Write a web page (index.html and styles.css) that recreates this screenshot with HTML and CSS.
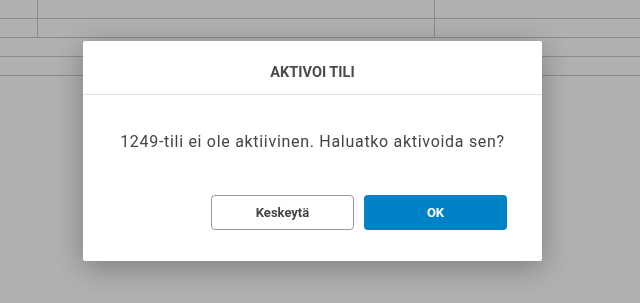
FILE: index.html
```html
<!DOCTYPE html>
<html lang="fi">
<head>
    <meta charset="UTF-8">
    <meta name="viewport" content="width=device-width, initial-scale=1.0">
    <title>Aktivoi tili</title>
    <link rel="stylesheet" href="styles.css">
</head>
<body>
    <!-- Table in the background -->
    <div class="grid">
        <div class="row split">
            <div class="cell first"></div>
            <div class="cell middle"></div>
            <div class="cell"></div>
        </div>
        <div class="row split">
            <div class="cell first"></div>
            <div class="cell middle"></div>
            <div class="cell"></div>
        </div>
        <div class="row"></div>
        <div class="row"></div>
    </div>

    <!-- Dialog -->
    <div class="overlay">
        <div class="dialog">
            <div class="dialog-header">AKTIVOI TILI</div>
            <div class="dialog-body">
                <p class="message">1249-tili ei ole aktiivinen. Haluatko aktivoida sen?</p>
                <div class="actions">
                    <button class="btn btn-cancel">Keskeytä</button>
                    <button class="btn btn-ok">OK</button>
                </div>
            </div>
        </div>
    </div>
</body>
</html>
```

FILE: styles.css
```css
body {
    margin: 0;
    font-family: Roboto, "Liberation Sans", Arial, sans-serif;
    background-color: #fff;
    height: 100vh;
    overflow: hidden;
}

.grid {
    width: 100%;
}

.row {
    height: 18px;
    border-bottom: 1px solid #c8c8c8;
}

.split {
    display: flex;
}

.cell {
    flex: 1;
}

.cell.first {
    flex: 0 0 37px;
    border-right: 1px solid #c8c8c8;
}

.cell.middle {
    flex: 0 0 396px;
    border-right: 1px solid #c8c8c8;
}

.overlay {
    position: fixed;
    top: 0;
    left: 0;
    right: 0;
    bottom: 0;
    background: rgba(0, 0, 0, 0.31);
}

.dialog {
    width: 459px;
    height: 220px;
    margin: 41px 0 0 83px;
    background: #fff;
    border-radius: 2px;
    box-shadow: 0 6px 30px rgba(0, 0, 0, 0.3);
    display: flex;
    flex-direction: column;
}

.dialog-header {
    height: 54px;
    border-bottom: 1px solid #e4e4e4;
    display: flex;
    align-items: center;
    justify-content: center;
    padding-top: 10px;
    box-sizing: border-box;
    font-size: 14.5px;
    font-weight: bold;
    color: #4a4a4a;
}

.dialog-body {
    flex: 1;
    display: flex;
    flex-direction: column;
    padding: 0 35px 31px 35px;
}

.message {
    margin: 37px 0 0 0;
    text-align: center;
    font-size: 16px;
    letter-spacing: 0.7px;
    color: #444;
}

.actions {
    margin-top: auto;
    display: flex;
    justify-content: flex-end;
    gap: 10px;
}

.btn {
    width: 143px;
    height: 35px;
    border-radius: 4px;
    font-family: Roboto, "Liberation Sans", Arial, sans-serif;
    font-size: 13px;
    font-weight: bold;
    cursor: pointer;
}

.btn-cancel {
    background: #fff;
    border: 1px solid #9a9a9a;
    color: #444;
}

.btn-ok {
    background: #0082c8;
    border: none;
    color: #fff;
}
```
